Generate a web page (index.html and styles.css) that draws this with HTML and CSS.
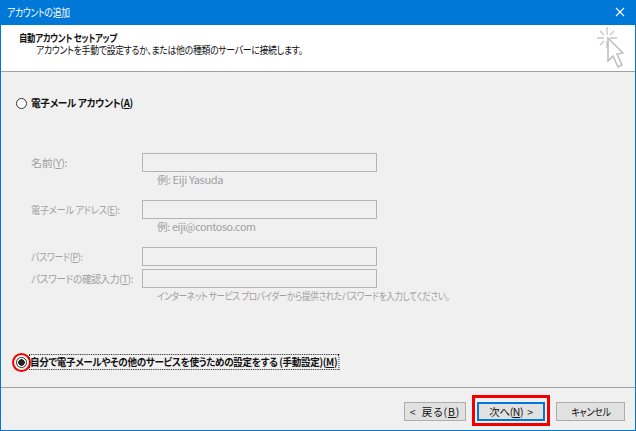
FILE: index.html
```html
<!DOCTYPE html>
<html lang="ja">
<head>
<meta charset="utf-8">
<title>アカウントの追加</title>
<link rel="stylesheet" href="styles.css">
</head>
<body>
<div class="window">
  <div class="titlebar">
    <span class="t sx-title">アカウントの追加</span>
    <svg class="close" width="10" height="10" viewBox="0 0 10 10"><path d="M1 1L9 9M9 1L1 9" stroke="#fff" stroke-width="1.1" fill="none"/></svg>
  </div>
  <div class="header">
    <div class="header-text">
      <div class="h-title"><span class="t sx-head">自動アカウント セットアップ</span></div>
      <div class="h-sub"><span class="t sx-sub">アカウントを手動で設定するか、または他の種類のサーバーに接続します。</span></div>
    </div>
    <svg class="wizard" width="28" height="42" viewBox="0 0 28 42">
      <path d="M11 1V9M11 15V22M1 12H8M14 12H21M4 5L8 9M18 5L14 9M4 19L8 15" stroke="#c4c4c4" stroke-width="1.3" fill="none"/>
      <path d="M12 12V35L17 30L22 41L26 39L21 28L27 27Z" fill="#fff" stroke="#bdbdbd" stroke-width="1.500"/>
    </svg>
  </div>
  <div class="body">
    <label class="radio-row first"><span class="radio"></span><b class="rlabel t sx-r1">電子メール アカウント(<u>A</u>)</b></label>
    <div class="form">
      <div class="field"><span class="flabel"><span class="t sx-name">名前(<u>Y</u>):</span></span><span class="input"></span></div>
      <div class="hint"><span class="t sx-h1">例: Eiji Yasuda</span></div>
      <div class="field gap"><span class="flabel"><span class="t sx-email">電子メール アドレス(<u>E</u>):</span></span><span class="input"></span></div>
      <div class="hint"><span class="t sx-h2">例: eiji@contoso.com</span></div>
      <div class="field gap"><span class="flabel"><span class="t sx-pw">パスワード(<u>P</u>):</span></span><span class="input"></span></div>
      <div class="field tight"><span class="flabel"><span class="t sx-conf">パスワードの確認入力(<u>T</u>):</span></span><span class="input"></span></div>
      <div class="hint"><span class="t sx-h3">インターネット サービス プロバイダーから提供されたパスワードを入力してください。</span></div>
    </div>
    <label class="radio-row second">
      <span class="radio checked"><span class="ring"></span></span>
      <b class="rlabel focus t sx-r2">自分で電子メールやその他のサービスを使うための設定をする (手動設定)(<u>M</u>)</b>
    </label>
  </div>
  <div class="footer">
    <span class="btn back">&lt; 戻る(<u>B</u>)</span>
    <span class="btn primary">次へ(<u>N</u>) &gt;<span class="mark"></span></span>
    <span class="btn cancel"><span class="t mid sx-cancel">キャンセル</span></span>
  </div>
</div>
</body>
</html>
```
FILE: styles.css
```css
* { box-sizing: border-box; }
html, body { margin: 0; height: 100%; }
body {
  font-family: "Noto Sans CJK JP", "Noto Sans", sans-serif;
  font-size: 10.5px;
  font-feature-settings: "palt";
  letter-spacing: -0.35px;
  color: #111;
  background: #f0f0f0;
}
u { text-decoration: underline; text-underline-offset: 1px; }

/* Meiryo UI has much narrower kana than the installed CJK fonts */
.t { display: inline-block; white-space: pre; transform-origin: left center; transform: scaleX(var(--sx, 1)); }
.t.mid { transform-origin: center; }
.sx-title { --sx: .80; }
.sx-head { --sx: .80; }
.sx-sub { --sx: .845; }
.sx-r1 { --sx: .92; }
.sx-r2 { --sx: .91; }
.sx-name { --sx: 1.05; }
.sx-email { --sx: .88; }
.sx-pw { --sx: .85; }
.sx-conf { --sx: .92; }
.sx-h1 { --sx: 1.06; }
.sx-h2 { --sx: 1.02; }
.sx-h3 { --sx: .81; }
.sx-cancel { --sx: .86; }

.window {
  width: 636px;
  height: 431px;
  border: 1px solid #0078d7;
  border-top: 0;
  display: flex;
  flex-direction: column;
  background: #f0f0f0;
}
.titlebar {
  height: 25px;
  flex: none;
  background: #0078d7;
  color: #fff;
  display: flex;
  align-items: center;
  justify-content: space-between;
  padding: 0 10px 1px 6px;
  font-size: 11px;
}
.close { display: block; }
.header {
  height: 47px;
  flex: none;
  background: #fff;
  border-bottom: 1px solid #a0a0a0;
  display: flex;
  justify-content: space-between;
  padding: 3px 11px 0 18px;
}
.h-title { font-weight: 700; line-height: 12px; margin-top: 4px; }
.h-sub { padding-left: 17px; line-height: 12px; }
.wizard { margin-top: -2px; }
.body { flex: 1; padding-left: 15px; }
.radio-row { display: flex; align-items: center; }
.radio-row.first { margin-top: 24px; height: 14px; }
.radio-row.second { margin-top: 51px; height: 16px; }
.radio {
  width: 11px;
  height: 11px;
  border: 1px solid #333;
  border-radius: 50%;
  background: #fff;
  flex: none;
  margin-right: 4px;
  position: relative;
}
.radio.checked { background: radial-gradient(circle, #222 0 3px, #fff 3.500px); margin-right: 3px; }
.ring {
  position: absolute;
  left: -5px;
  top: -5px;
  width: 19px;
  height: 19px;
  border: 2.500px solid #f00000;
  border-radius: 50%;
}
.rlabel { font-weight: 700; line-height: 14px; }
.focus { outline: 1px dotted #222; padding-right: 1px; }
.form { color: #a0a0a0; padding-left: 15px; margin-top: 42px; }
.field { display: flex; align-items: center; height: 20px; }
.field.gap { margin-top: 12px; }
.field.tight { margin-top: 2px; }
.flabel { width: 111px; flex: none; }
.input {
  width: 235px;
  height: 19px;
  border: 1px solid #b4b4b4;
  background: #f0f0f0;
}
.hint { padding-left: 126px; line-height: 14px; margin-top: 1px; }
.footer {
  height: 43px;
  flex: none;
  border-top: 1px solid #a0a0a0;
  display: flex;
  align-items: flex-start;
  justify-content: flex-end;
  padding: 14px 10px 0 0;
}
.btn {
  height: 19px;
  background: #e1e1e1;
  border: 1px solid #adadad;
  color: #111;
  display: flex;
  align-items: center;
  justify-content: center;
  position: relative;
  white-space: pre;
}
.back { width: 62px; word-spacing: 2px; letter-spacing: 0.9px; }
.primary { border: 2px solid #0078d7; width: 68px; margin-left: 11px; word-spacing: 2px; }
.cancel { width: 69px; margin-left: 11px; }
.mark {
  position: absolute;
  left: -7px;
  top: -9px;
  width: 78px;
  height: 31px;
  border: 3px solid #f00000;
}
```
